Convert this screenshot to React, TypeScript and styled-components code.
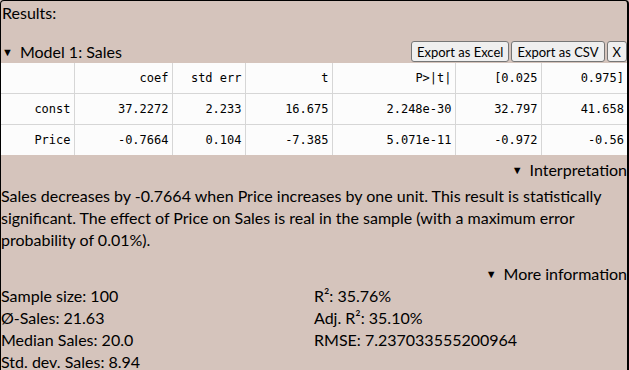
import styled, { createGlobalStyle } from "styled-components";

const GlobalStyle = createGlobalStyle`
  html, body {
    margin: 0;
    padding: 0;
    background: #d5c4bc;
  }
`;

const Panel = styled.div`
  box-sizing: border-box;
  width: 100%;
  min-height: 420px;
  background-color: #d5c4bc;
  border: 1px solid #000;
  border-right-width: 2px;
  border-bottom: none;
  border-radius: 4px 4px 0 0;
  font-family: Lato, "Noto Sans", sans-serif;
  font-size: 16px;
  line-height: 22px;
  color: #000;
`;

const Title = styled.div`
  padding: 1px 1px 0;
  margin-bottom: 17px;
`;

const ModelHeader = styled.div`
  display: flex;
  justify-content: space-between;
  align-items: flex-end;
  padding-left: 1px;
`;

const Summary = styled.div<{ right?: boolean }>`
  display: flex;
  align-items: center;
  gap: 7px;
  justify-content: ${(p) => (p.right ? "flex-end" : "flex-start")};
`;

const Marker = styled.span`
  font-size: 11px;
`;

const Buttons = styled.div`
  display: flex;
  gap: 2px;
  padding-bottom: 1px;
`;

const Button = styled.button`
  box-sizing: border-box;
  height: 21px;
  margin: 0;
  padding: 0 5px;
  font-family: Lato, "Noto Sans", sans-serif;
  font-size: 13px;
  color: #000;
  background: #efefef;
  border: 1px solid #767676;
  border-radius: 3px;
`;

const Table = styled.table`
  width: 100%;
  border-collapse: collapse;
  background: #fcfcfc;
  font-family: "DejaVu Sans Mono", "Liberation Mono", monospace;
  font-size: 12px;
  td,
  th {
    border: 1px solid #d6d6d6;
    text-align: right;
    font-weight: 400;
    padding: 0 3px;
    height: 30px;
  }
  tr:first-child td,
  tr:first-child th {
    border-top: none;
  }
  tr:last-child td {
    border-bottom: none;
  }
  td:first-child,
  th:first-child {
    border-left: none;
  }
  td:last-child,
  th:last-child {
    border-right: none;
  }
`;

const Interpretation = styled.div`
  margin-top: 4px;
`;

const Paragraph = styled.p`
  margin: 4px 0 12px;
`;

const Stats = styled.div`
  display: grid;
  grid-template-columns: 1fr 1fr;
`;

const widths = [73, 98, 73, 87, 123, 86, 86];

const header = ["", "coef", "std err", "t", "P>|t|", "[0.025", "0.975]"];
const rows = [
  ["const", "37.2272", "2.233", "16.675", "2.248e-30", "32.797", "41.658"],
  ["Price", "-0.7664", "0.104", "-7.385", "5.071e-11", "-0.972", "-0.56"],
];

export default function App() {
  return (
    <>
      <GlobalStyle />
      <Panel>
        <Title>Results:</Title>
        <ModelHeader>
          <Summary>
            <Marker>▼</Marker>
            <span>Model 1: Sales</span>
          </Summary>
          <Buttons>
            <Button>Export as Excel</Button>
            <Button>Export as CSV</Button>
            <Button>X</Button>
          </Buttons>
        </ModelHeader>
        <Table>
          <colgroup>
            {widths.map((w, i) => (
              <col key={i} style={{ width: w }} />
            ))}
          </colgroup>
          <thead>
            <tr>
              {header.map((h, i) => (
                <th key={i}>{h}</th>
              ))}
            </tr>
          </thead>
          <tbody>
            {rows.map((r) => (
              <tr key={r[0]}>
                {r.map((c, i) => (
                  <td key={i}>{c}</td>
                ))}
              </tr>
            ))}
          </tbody>
        </Table>
        <Interpretation>
          <Summary right>
            <Marker>▼</Marker>
            <span>Interpretation</span>
          </Summary>
          <Paragraph>
            Sales decreases by -0.7664 when Price increases by one unit. This
            result is statistically significant. The effect of Price on Sales
            is real in the sample (with a maximum error probability of 0.01%).
          </Paragraph>
        </Interpretation>
        <Summary right>
          <Marker>▼</Marker>
          <span>More information</span>
        </Summary>
        <Stats>
          <div>Sample size: 100</div>
          <div>R²: 35.76%</div>
          <div>Ø-Sales: 21.63</div>
          <div>Adj. R²: 35.10%</div>
          <div>Median Sales: 20.0</div>
          <div>RMSE: 7.237033555200964</div>
          <div>Std. dev. Sales: 8.94</div>
          <div></div>
        </Stats>
      </Panel>
    </>
  );
}
